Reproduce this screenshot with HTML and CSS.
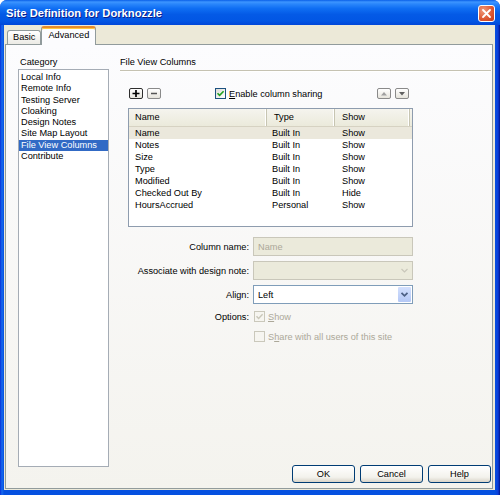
FILE: index.html
```html
<!DOCTYPE html>
<html>
<head>
<meta charset="utf-8">
<title>Site Definition for Dorknozzle</title>
<link rel="stylesheet" href="styles.css">
</head>
<body>
<div class="window">
  <div class="titlebar">
    <span class="title">Site Definition for Dorknozzle</span>
    <span class="close"><svg width="11" height="11" viewBox="0 0 11 11"><path d="M2 2L9 9M9 2L2 9" stroke="#fff" stroke-width="1.8" stroke-linecap="round"/></svg></span>
  </div>
  <div class="client">
    <div class="tabs">
      <div class="tab">Basic</div>
      <div class="tab active">Advanced</div>
    </div>
    <div class="panel">
      <div class="left">
        <div class="label">Category</div>
        <ul class="catlist">
          <li>Local Info</li>
          <li>Remote Info</li>
          <li>Testing Server</li>
          <li>Cloaking</li>
          <li>Design Notes</li>
          <li>Site Map Layout</li>
          <li class="sel">File View Columns</li>
          <li>Contribute</li>
        </ul>
      </div>
      <div class="right">
        <div class="heading">File View Columns</div>
        <div class="toolbar">
          <span class="tbtn dark"><svg width="12" height="9" viewBox="0 0 12 9"><path d="M2.5 4.5H9.5M6 1V8" stroke="#000" stroke-width="1.7"/></svg></span>
          <span class="tbtn minus"><svg width="12" height="9" viewBox="0 0 12 9"><path d="M3 4.5H9" stroke="#555" stroke-width="1.3"/></svg></span>
          <span class="chkgroup">
            <span class="chk"><svg width="9" height="9" viewBox="0 0 9 9"><path d="M1.5 4.2L3.6 6.4L7.6 2.2" fill="none" stroke="#21a121" stroke-width="1.6"/></svg></span>
            <span class="chklabel"><u>E</u>nable column sharing</span>
          </span>
          <span class="tbtn arrow up"><svg width="12" height="9" viewBox="0 0 12 9"><path d="M3 6.5L6 3L9 6.5Z" fill="#a0a0a0"/></svg></span>
          <span class="tbtn arrow"><svg width="12" height="9" viewBox="0 0 12 9"><path d="M3 3H9L6 6.5Z" fill="#606060"/></svg></span>
        </div>
        <div class="table">
          <div class="thead">
            <div class="th">Name</div>
            <div class="th">Type</div>
            <div class="th">Show</div>
            <div class="th last"></div>
          </div>
          <div class="row sel"><span>Name</span><span>Built In</span><span>Show</span></div>
          <div class="row"><span>Notes</span><span>Built In</span><span>Show</span></div>
          <div class="row"><span>Size</span><span>Built In</span><span>Show</span></div>
          <div class="row"><span>Type</span><span>Built In</span><span>Show</span></div>
          <div class="row"><span>Modified</span><span>Built In</span><span>Show</span></div>
          <div class="row"><span>Checked Out By</span><span>Built In</span><span>Hide</span></div>
          <div class="row"><span>HoursAccrued</span><span>Personal</span><span>Show</span></div>
        </div>
        <div class="form">
          <div class="flabel">Column name:</div>
          <div class="field disabled">Name</div>
          <div class="flabel">Associate with design note:</div>
          <div class="field disabled select"><span class="val"></span><span class="darrow"><svg width="9" height="7" viewBox="0 0 9 7"><path d="M1.5 2L4.5 5L7.5 2" fill="none" stroke="#c9c7ba" stroke-width="1.2"/></svg></span></div>
          <div class="flabel">Align:</div>
          <div class="field select enabled"><span class="val">Left</span><span class="sarrow"><svg width="9" height="7" viewBox="0 0 9 7"><path d="M1.5 1.8L4.5 4.8L7.5 1.8" fill="none" stroke="#4d6185" stroke-width="1.8"/></svg></span></div>
          <div class="flabel">Options:</div>
          <div class="opt"><span class="chk dis"><svg width="9" height="9" viewBox="0 0 9 9"><path d="M1.5 4.2L3.6 6.4L7.6 2.2" fill="none" stroke="#c9c7ba" stroke-width="1.4"/></svg></span><span class="optlabel"><u>S</u>how</span></div>
          <div class="flabel"></div>
          <div class="opt"><span class="chk dis"></span><span class="optlabel">S<u>h</u>are with all users of this site</span></div>
        </div>
        <div class="buttons">
          <div class="btn">OK</div>
          <div class="btn">Cancel</div>
          <div class="btn">Help</div>
        </div>
      </div>
    </div>
  </div>
</div>
</body>
</html>
```
FILE: styles.css
```css
html, body {
  margin: 0;
  padding: 0;
  background: #ffffff;
}

body {
  font-family: "Liberation Sans", Arial, sans-serif;
  font-size: 9.2px;
  color: #000;
}

.window {
  width: 500px;
  height: 495px;
  display: flex;
  flex-direction: column;
  background: linear-gradient(to right, #0831d9 0, #166aee 2px, #0550e0 4px, #0550e0 495px, #0b3ed8 498px, #00138c 500px);
  border-radius: 7px 7px 0 0;
  overflow: hidden;
}

.titlebar {
  height: 25px;
  flex: none;
  display: flex;
  align-items: center;
  padding: 1px 5px 0 6px;
  box-sizing: border-box;
  background: linear-gradient(to bottom, #0a5fe8 0%, #3d95ff 8%, #2a86fb 16%, #0f6ef3 34%, #045ae6 58%, #0256e4 84%, #0147d8 100%);
}

.title {
  flex: 1;
  color: #fff;
  font-weight: bold;
  font-size: 11.2px;
  text-shadow: 1px 1px #0b1f8c;
}

.close {
  width: 17px;
  height: 17px;
  box-sizing: border-box;
  border: 1px solid #fff;
  border-radius: 3px;
  background: radial-gradient(circle at 30% 30%, #ee9a7c, #de5a35 55%, #c2391a);
  display: flex;
  align-items: center;
  justify-content: center;
}

.close svg { display: block; }

.client {
  flex: 1;
  margin: 0 5px 5px 4px;
  background: #ece9d8;
  display: flex;
  flex-direction: column;
  min-height: 0;
}

.tabs {
  height: 19px;
  flex: none;
  display: flex;
  align-items: flex-end;
  padding-left: 3px;
}

.tab {
  height: 14px;
  box-sizing: border-box;
  border: 1px solid #919b9c;
  border-bottom: none;
  border-radius: 3px 3px 0 0;
  background: linear-gradient(#ffffff, #ecebe5);
  padding: 0 5px;
  line-height: 13px;
}

.tab.active {
  height: 19px;
  margin-bottom: -1px;
  position: relative;
  z-index: 1;
  background: #fcfcfe;
  border-top: 2px solid #e68b2c;
  box-shadow: inset 0 1px #ffc73c;
  padding: 1px 6px 0;
  line-height: 12px;
}

.panel {
  flex: 1;
  margin: 0 2px 1px 1px;
  border: 1px solid #919b9c;
  background: linear-gradient(#fcfcfe, #f4f3ee);
  display: flex;
  gap: 11px;
  padding: 10px 1px 5px 12px;
  min-height: 0;
}

.left {
  width: 91px;
  flex: none;
  display: flex;
  flex-direction: column;
  padding-bottom: 16px;
}

.label {
  line-height: 14px;
  padding-left: 2px;
}

.catlist {
  flex: 1;
  margin: 0;
  padding: 2px 0 0;
  list-style: none;
  background: #fff;
  border: 1px solid #a5acb5;
}

.catlist li {
  height: 11.25px;
  line-height: 11.25px;
  padding-left: 2px;
  white-space: nowrap;
}

.catlist li.sel {
  background: #316ac5;
  color: #fff;
}

.right {
  flex: 1;
  display: flex;
  flex-direction: column;
  min-width: 0;
}

.heading {
  line-height: 14px;
  padding-bottom: 1px;
  border-bottom: 1px solid #c5c2b2;
  box-shadow: 0 1px #ffffff;
}

.toolbar {
  margin-top: 17px;
  height: 11px;
  display: flex;
  align-items: center;
  padding: 0 82px 0 9px;
}

.tbtn {
  width: 14px;
  height: 11px;
  box-sizing: border-box;
  border: 1px solid #8a8a8a;
  border-radius: 2px;
  background: linear-gradient(#ffffff, #e6e4dc);
  display: flex;
  align-items: center;
  justify-content: center;
}

.tbtn svg { display: block; }

.tbtn.dark { border-color: #2e2e2e; }
.tbtn.minus { margin-left: 4px; }
.tbtn.up { margin-left: auto; }
.tbtn.arrow + .tbtn.arrow { margin-left: 4px; }

.chkgroup {
  margin-left: 54px;
  display: flex;
  align-items: center;
}

.chk {
  width: 11px;
  height: 11px;
  box-sizing: border-box;
  border: 1px solid #1c5180;
  background: linear-gradient(135deg, #dcdcd7, #ffffff);
  display: flex;
  align-items: center;
  justify-content: center;
  flex: none;
}

.chk svg { display: block; }

.chk.dis {
  border-color: #cac8bb;
  background: #f6f5f0;
}

.chklabel { margin-left: 3px; }

.table {
  margin: 9px 0 0 8px;
  width: 285px;
  height: 119px;
  box-sizing: border-box;
  border: 1px solid #8e9cae;
  background: #fff;
}

.thead {
  display: grid;
  grid-template-columns: 138px 68px 75px 1fr;
  height: 18px;
  box-sizing: border-box;
  border-bottom: 1px solid #d6d2c2;
  background: linear-gradient(#f5f4ee, #ebeadb);
}

.th {
  line-height: 17px;
  padding-left: 7px;
  border-right: 1px solid #c7c5b2;
  box-shadow: inset -1px 0 #ffffff;
}

.th:first-child { padding-left: 6px; }
.th.last { border-right: none; box-shadow: none; }

.row {
  display: grid;
  grid-template-columns: 138px 68px 75px 1fr;
  height: 12px;
  line-height: 12px;
}

.row span:nth-child(1) { padding-left: 6px; }
.row span:nth-child(2) { padding-left: 5px; }
.row span:nth-child(3) { padding-left: 7px; }

.row.sel { background: #ebe8dc; }

.form {
  margin-top: 10px;
  display: grid;
  grid-template-columns: 129px 160px;
  grid-template-rows: 19px 19px 19px 15px 15px;
  column-gap: 4px;
  row-gap: 5px;
  align-items: center;
}

.flabel {
  text-align: right;
  white-space: nowrap;
}

.field {
  height: 19px;
  box-sizing: border-box;
  border: 1px solid #c9c7ba;
  display: flex;
  align-items: center;
  padding-left: 4px;
}

.field.disabled {
  background: #ebeadb;
  color: #aca899;
}

.field.select { padding-right: 0; }
.field .val { flex: 1; }

.darrow {
  width: 15px;
  height: 17px;
  display: flex;
  align-items: center;
  justify-content: center;
}

.field.enabled {
  background: #fff;
  border-color: #7f9db9;
}

.sarrow {
  width: 15px;
  height: 17px;
  box-sizing: border-box;
  border: 1px solid #ffffff;
  border-radius: 2px;
  background: linear-gradient(#d3e0fd, #b4c8f6);
  display: flex;
  align-items: center;
  justify-content: center;
}

.sarrow svg, .darrow svg { display: block; }

.opt {
  display: flex;
  align-items: center;
  padding-left: 1px;
}

.optlabel {
  margin-left: 3px;
  color: #aca899;
}

.buttons {
  margin-top: auto;
  display: flex;
  justify-content: flex-end;
  gap: 5px;
}

.btn {
  width: 63px;
  height: 18px;
  box-sizing: border-box;
  border: 1px solid #003c74;
  border-radius: 3px;
  background: linear-gradient(#ffffff, #f3f2ec 70%, #d9d4c8);
  display: flex;
  align-items: center;
  justify-content: center;
}
```
